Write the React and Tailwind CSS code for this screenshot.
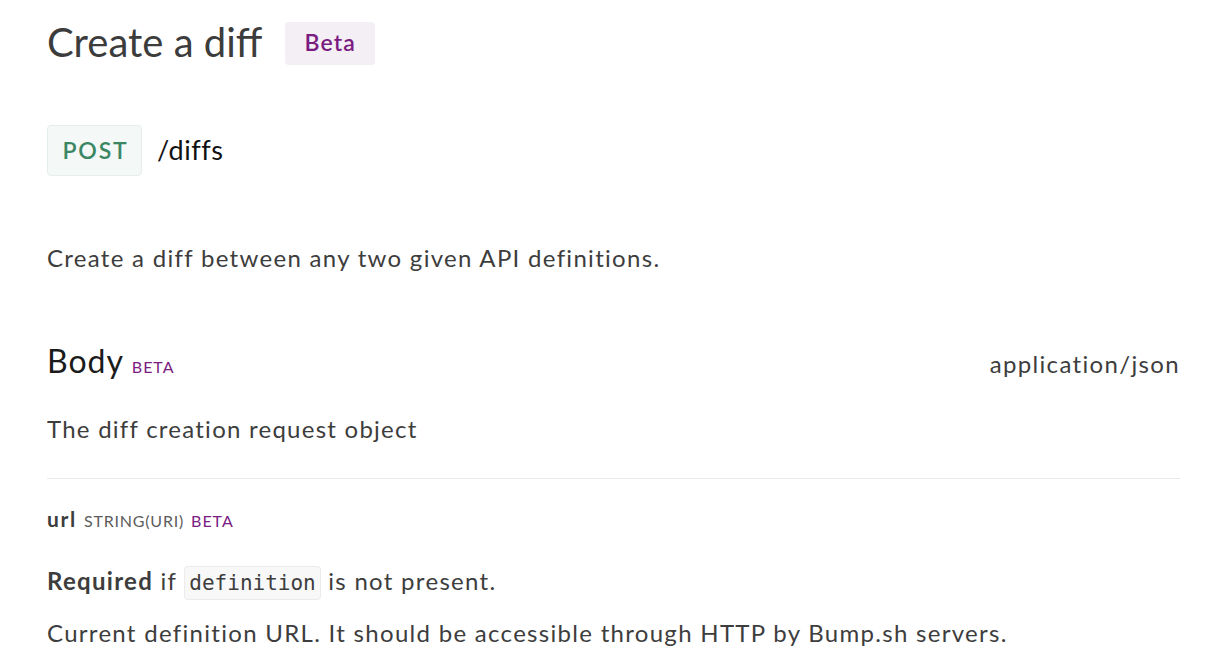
export default function App() {
  return (
    <div className="w-[1224px] h-[664px] overflow-hidden bg-white font-['Lato',sans-serif] text-[#3d3d3d]">
      <div className="pl-[47px] pr-[44px] pt-[22px]">
        <div className="flex items-center gap-[23px] h-[43px]">
          <h1 className="text-[40px] leading-[43px] text-[#3c3c3c] font-normal pb-[2px]">Create a diff</h1>
          <span className="rounded-[4px] bg-[#f3eff5] text-[#7b1c81] text-[23px] tracking-[0.05em] font-semibold px-[19px] h-[43px] pb-[2px] flex items-center">Beta</span>
        </div>
        <div className="flex items-center gap-[15px] mt-[60px]">
          <span className="rounded-[4px] bg-[#f4f8f6] border border-[#e6eeea] text-[#3b8663] text-[23px] tracking-[0.08em] font-semibold w-[95px] h-[51px] pl-[2px] flex items-center justify-center">POST</span>
          <span className="text-[27px] tracking-[0.02em] text-[#111111]">/diffs</span>
        </div>
        <p className="mt-[66px] text-[24px] leading-[32px] tracking-[0.054em]">Create a diff between any two given API definitions.</p>
        <div className="mt-[67px] flex items-baseline justify-between">
          <div className="flex items-baseline gap-[8px]">
            <span className="text-[32px] leading-[40px] tracking-[0.03em] text-[#1b1b1b]">Body</span>
            <span className="text-[16px] tracking-[0.06em] text-[#7b1c81]">BETA</span>
          </div>
          <span className="text-[24px] tracking-[0.056em]">application/json</span>
        </div>
        <p className="mt-[31px] text-[24px] leading-[32px] tracking-[0.052em]">The diff creation request object</p>
        <div className="mt-[33px] border-t border-[#e9e9e9]"></div>
        <div className="mt-[26px] flex items-baseline gap-[7px] leading-[28px]">
          <span className="text-[21px] font-bold tracking-[0.08em]">url</span>
          <span className="text-[16px] tracking-[0.05em] text-[#5c5c5c]">STRING(URI)</span>
          <span className="text-[16px] tracking-[0.06em] text-[#7b1c81]">BETA</span>
        </div>
        <p className="mt-[29px] text-[24px] leading-[34px] tracking-[0.054em]">
          <span className="font-bold">Required</span> if{" "}
          <code className="font-['DejaVu_Sans_Mono',monospace] text-[21px] tracking-normal bg-[#f8f8f9] border border-[#ebebeb] rounded-[4px] px-[4px] py-[4px]">definition</code>{" "}
          is not present.
        </p>
        <p className="mt-[17px] text-[24px] leading-[32px] tracking-[0.054em]">Current definition URL. It should be accessible through HTTP by Bump.sh servers.</p>
      </div>
    </div>
  );
}
